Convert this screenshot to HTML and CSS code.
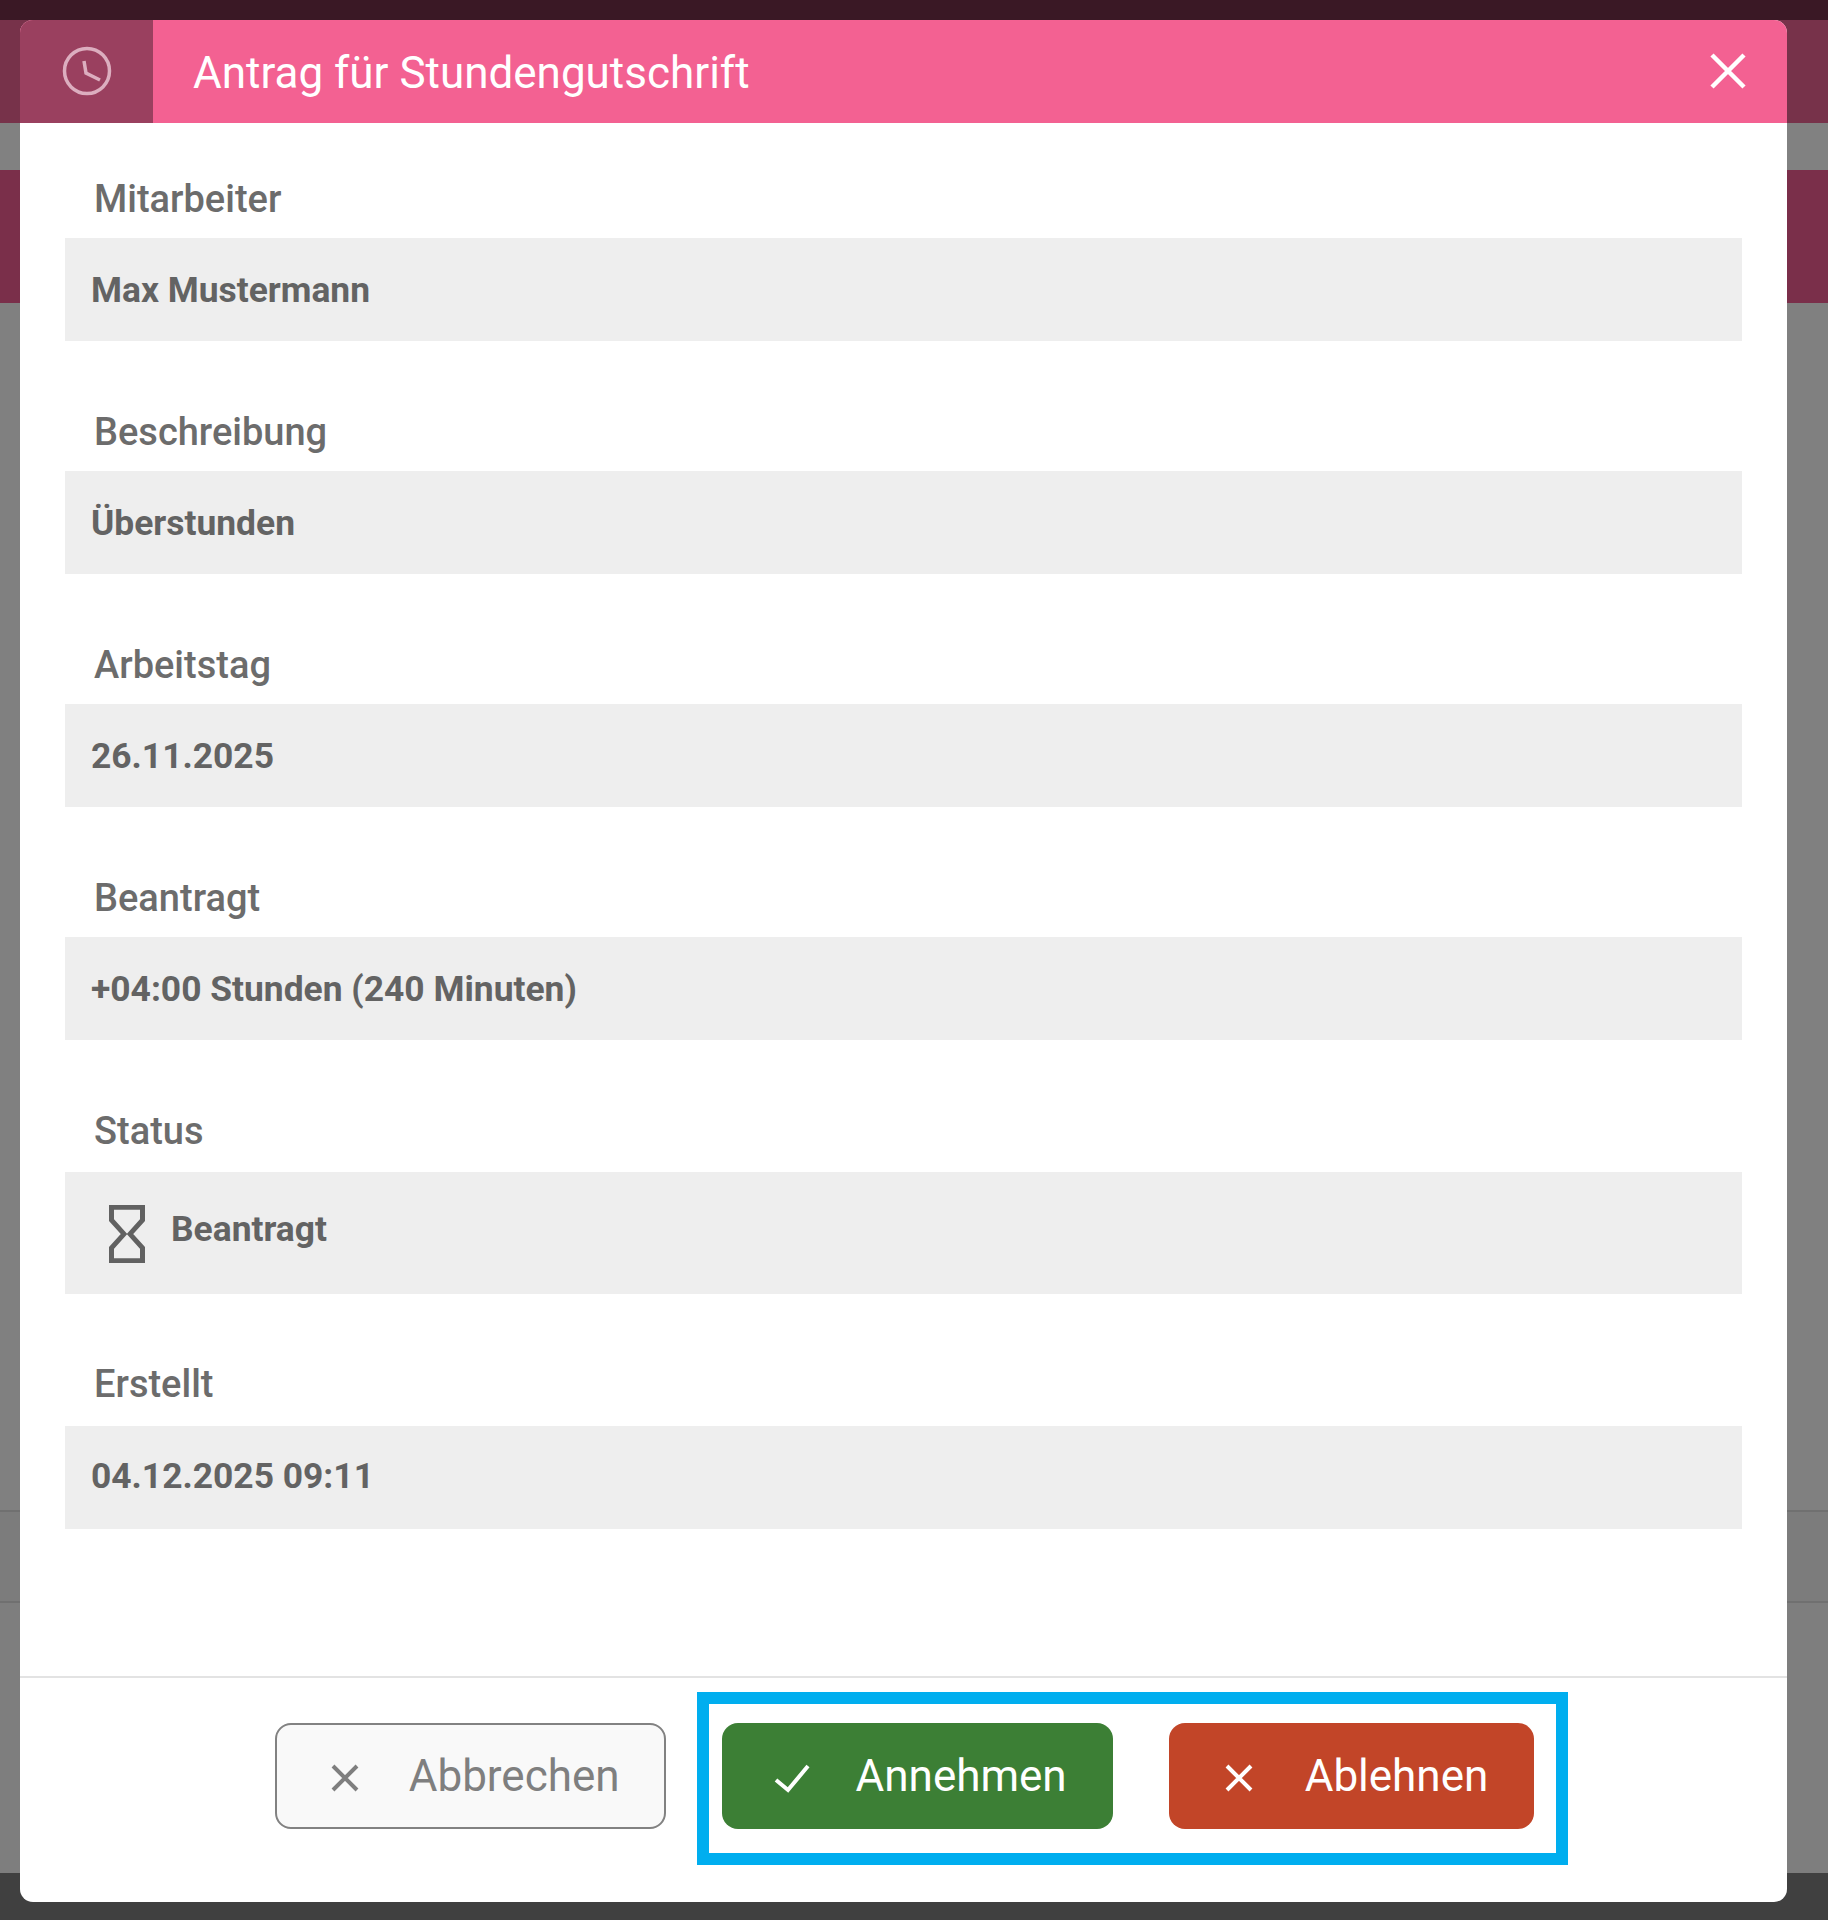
FILE: index.html
```html
<!DOCTYPE html>
<html lang="de">
<head>
<meta charset="utf-8">
<title>Antrag für Stundengutschrift</title>
<link rel="stylesheet" href="styles.css">
</head>
<body>
<div class="backdrop">
  <div class="band band-top"></div>
  <div class="band band-plum"></div>
  <div class="band band-grey-a"></div>
  <div class="band band-wine"></div>
  <div class="band band-grey-b"></div>
  <div class="band band-row"></div>
  <div class="band band-grey-c"></div>
  <div class="band band-bottom"></div>
</div>
<section class="modal">
  <header class="modal-head">
    <div class="head-icon">
      <svg class="clock" viewBox="0 0 52 52" fill="none"><circle cx="26" cy="26" r="22.5"/><path d="M23 16l2 12 14 7"/></svg>
    </div>
    <h1 class="head-title">Antrag für Stundengutschrift</h1>
    <svg class="head-close" viewBox="0 0 36 36" fill="none"><path d="M2 2l32 32M34 2L2 34"/></svg>
  </header>
  <div class="modal-body">
    <div class="group">
      <div class="label">Mitarbeiter</div>
      <div class="value">Max Mustermann</div>
    </div>
    <div class="group">
      <div class="label">Beschreibung</div>
      <div class="value">Überstunden</div>
    </div>
    <div class="group">
      <div class="label">Arbeitstag</div>
      <div class="value">26.11.2025</div>
    </div>
    <div class="group">
      <div class="label">Beantragt</div>
      <div class="value">+04:00 Stunden (240 Minuten)</div>
    </div>
    <div class="group">
      <div class="label label-status">Status</div>
      <div class="value value-status">
        <svg class="hourglass" viewBox="0 0 36 60" fill="none" preserveAspectRatio="none"><path d="M2.500 2.500h31v13L21 30l12.500 14.500v13h-31v-13L15 30 2.500 15.500z"/></svg>
        <span>Beantragt</span>
      </div>
    </div>
    <div class="group">
      <div class="label label-created">Erstellt</div>
      <div class="value value-created">04.12.2025 09:11</div>
    </div>
  </div>
  <footer class="modal-foot">
    <button class="btn btn-cancel" type="button">
      <span class="btn-icon"><svg viewBox="0 0 28 28" fill="none"><path d="M2 2l24 24M26 2L2 26"/></svg></span>
      <span>Abbrechen</span>
    </button>
    <button class="btn btn-accept" type="button">
      <span class="btn-icon"><svg viewBox="0 0 36 28" fill="none"><path d="M2 16l12 10L34 2"/></svg></span>
      <span>Annehmen</span>
    </button>
    <button class="btn btn-reject" type="button">
      <span class="btn-icon"><svg viewBox="0 0 28 28" fill="none"><path d="M2 2l24 24M26 2L2 26"/></svg></span>
      <span>Ablehnen</span>
    </button>
    <div class="highlight"></div>
  </footer>
</section>
</body>
</html>
```

FILE: styles.css
```css
* { box-sizing: border-box; }
html, body { margin: 0; padding: 0; }
body {
  position: relative;
  width: 1828px;
  height: 1920px;
  overflow: hidden;
  font-family: Roboto, "Liberation Sans", sans-serif;
}
.backdrop { display: flex; flex-direction: column; height: 1920px; }
.band-top { height: 20px; background: #3a1825; }
.band-plum { height: 103px; background: #77324a; }
.band-grey-a { height: 47px; background: #818181; }
.band-wine { height: 133px; background: #7a2f4a; }
.band-grey-b { height: 1209px; background: #808080; border-bottom: 2px solid #707070; }
.band-row { height: 91px; background: #7c7c7c; border-bottom: 2px solid #707070; }
.band-grey-c { height: 270px; background: #7e7e7e; }
.band-bottom { height: 47px; background: #404040; }

.modal {
  position: absolute;
  left: 20px;
  top: 20px;
  width: 1767px;
  height: 1882px;
  display: flex;
  flex-direction: column;
  background: #fff;
  border-radius: 13px;
  overflow: hidden;
}
.modal-head {
  display: flex;
  align-items: center;
  flex: none;
  height: 103px;
  background: #f36192;
  color: #fff;
}
.head-icon {
  display: flex;
  align-items: center;
  justify-content: center;
  flex: none;
  width: 133px;
  height: 100%;
  background: #9a405f;
}
.clock { width: 52px; height: 52px; margin-top: -1px; }
.clock circle, .clock path { stroke: #dcaebf; stroke-width: 3.5px; }
.head-title {
  flex: 1;
  margin: 3px 0 0 40px;
  font-size: 44px;
  font-weight: 400;
  line-height: 50px;
}
.head-close { width: 36px; height: 36px; margin: -1px 41px 0 0; }
.head-close path { stroke: #fff; stroke-width: 4.5px; }

.modal-body {
  flex: 1;
  padding: 55px 45px 0;
  display: flex;
  flex-direction: column;
  gap: 70px;
}
.label {
  height: 40px;
  margin: 0 0 20px 29px;
  font-size: 38px;
  font-weight: 500;
  line-height: 42px;
  color: #6c6c6c;
}
.label-status { margin-bottom: 22px; }
.label-created { margin-top: -1px; margin-bottom: 23px; }
.value {
  display: flex;
  align-items: center;
  height: 103px;
  padding: 1px 0 0 26px;
  background: #eee;
  font-size: 35.4px;
  font-weight: 700;
  color: #636363;
}
.value-status { height: 122px; padding-left: 44px; gap: 26px; }
.value-status span { margin-top: -9px; }
.value-created { padding: 0 0 3px 26px; }
.hourglass { width: 36px; height: 58px; margin-top: 0; }
.hourglass path { stroke: #616161; stroke-width: 5px; }

.modal-foot {
  position: relative;
  display: flex;
  align-items: center;
  justify-content: center;
  gap: 56px;
  flex: none;
  height: 226px;
  border-top: 2px solid #e3e3e3;
  padding: 0 0 28px 2px;
}
.btn {
  display: flex;
  align-items: center;
  gap: 48px;
  height: 106px;
  padding: 0 47px 0 54px;
  border: 0;
  border-radius: 16px;
  font-family: inherit;
  font-size: 44px;
  font-weight: 400;
  color: #fff;
}
.btn-icon { display: flex; justify-content: center; width: 32px; margin-top: 4px; }
.btn-icon svg { height: 28px; flex: none; overflow: visible; }
.btn-icon path { stroke: currentColor; stroke-width: 4px; }
.btn-cancel { padding: 0 44px 0 52px; background: #f9f9f9; border: 2px solid #828282; color: #7f7f7f; }
.btn-accept { padding-right: 46px; background: #3c7f35; }
.btn-reject { gap: 50px; padding-right: 46px; background: #c24528; }
.highlight {
  position: absolute;
  left: 677px;
  top: 14px;
  width: 871px;
  height: 173px;
  border: 12px solid #00aeef;
  pointer-events: none;
}
```
